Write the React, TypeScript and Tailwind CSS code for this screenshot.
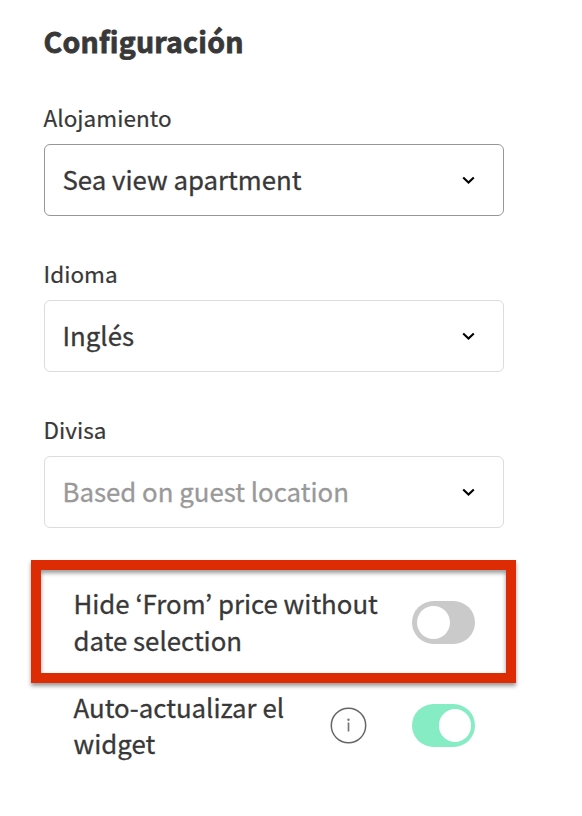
import React, { useState } from "react";
import clsx from "clsx";

type SelectProps = {
  label: string;
  value: string;
  active?: boolean;
  placeholder?: boolean;
};

const SelectField: React.FC<SelectProps> = ({ label, value, active, placeholder }) => {
  return (
    <div className="flex flex-col">
      <span className="h-[44px] pt-px text-[22.5px] leading-8 tracking-[0.05px] whitespace-nowrap [-webkit-text-stroke:0.2px]">
        {label}
      </span>
      <button
        type="button"
        className={clsx(
          "flex h-[72px] w-[460px] items-center justify-between rounded-[6px] border bg-white pr-[28px] pl-[18px]",
          active ? "border-[#979797]" : "border-[#dcdcdc]"
        )}
      >
        <span
          className={clsx(
            "pb-[2px] text-[25.8px] leading-9 whitespace-nowrap [-webkit-text-stroke:0.3px]",
            placeholder ? "text-[#999999]" : "text-[#383838]"
          )}
        >
          {value}
        </span>
        <svg
          width="13"
          height="8"
          viewBox="0 0 13 8"
          fill="none"
          className={clsx("shrink-0", placeholder && "mb-px")}
        >
          <path d="M1.2 1.4 L6.5 6.5 L11.8 1.4" stroke="#000" strokeWidth="2.1" />
        </svg>
      </button>
    </div>
  );
};

type ToggleProps = {
  checked: boolean;
  label: string;
  onChange: (val: boolean) => void;
};

const Toggle: React.FC<ToggleProps> = ({ checked, label, onChange }) => {
  return (
    <button
      type="button"
      role="switch"
      aria-checked={checked}
      aria-label={label}
      onClick={() => onChange(!checked)}
      className={clsx(
        "flex h-[43px] w-[63px] shrink-0 items-center rounded-full",
        checked ? "justify-end bg-[#85ecc3] pr-1" : "justify-start bg-[#cacaca] pl-[5px]"
      )}
    >
      <span className="size-[32.5px] rounded-full bg-white" />
    </button>
  );
};

const App: React.FC = () => {
  const [hidePrice, setHidePrice] = useState<boolean>(false);
  const [autoUpdate, setAutoUpdate] = useState<boolean>(true);

  return (
    <div className="h-[816px] w-[582px] overflow-hidden bg-white pt-[21px] font-['Noto_Sans_CJK_KR',sans-serif] text-[#383838]">
      <div className="flex flex-col pl-[43.5px]">
        <h2 className="h-[79px] text-[28.5px] leading-10 font-bold tracking-[0.22px] whitespace-nowrap [-webkit-text-stroke:0.8px]">
          Configuración
        </h2>
        <div className="flex flex-col gap-10">
          <SelectField label="Alojamiento" value="Sea view apartment" active />
          <SelectField label="Idioma" value="Inglés" />
          <SelectField label="Divisa" value="Based on guest location" placeholder />
        </div>
      </div>
      <div className="mt-8 ml-[31px] flex h-[123px] w-[485px] justify-between border-[10px] border-[#dd2b04] pt-[14px] pr-[31px] pl-[32.5px] shadow-[0_3px_4px_rgba(0,0,0,0.4),inset_0_3px_4px_rgba(0,0,0,0.4)]">
        <p className="text-[25.8px] leading-[37px] whitespace-nowrap [-webkit-text-stroke:0.3px]">
          Hide ‘From’ price without
          <br />
          date selection
        </p>
        <div className="pt-[17px]">
          <Toggle checked={hidePrice} label="Hide price" onChange={setHidePrice} />
        </div>
      </div>
      <div className="mt-[6px] ml-[73.5px] flex w-[401.5px]">
        <p className="flex-1 text-[25.8px] leading-9 whitespace-nowrap [-webkit-text-stroke:0.3px]">
          Auto-actualizar el
          <br />
          widget
        </p>
        <svg width="37" height="37" viewBox="0 0 37 37" fill="none" className="mt-[18px] mr-[45px] shrink-0">
          <circle cx="18.5" cy="18.5" r="17.2" stroke="#666" strokeWidth="1.5" />
          <circle cx="18.5" cy="12.7" r="1.2" fill="#777" />
          <path d="M18.5 15.5 V24.5" stroke="#777" strokeWidth="1.7" />
        </svg>
        <div className="pt-[15px]">
          <Toggle checked={autoUpdate} label="Auto update" onChange={setAutoUpdate} />
        </div>
      </div>
    </div>
  );
};

export default App;
